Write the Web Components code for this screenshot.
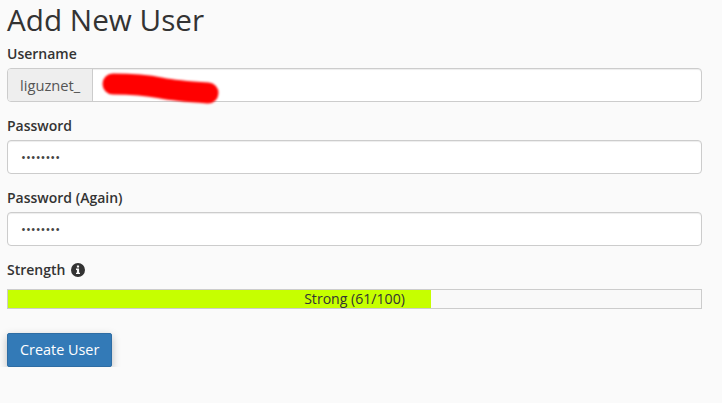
<!DOCTYPE html>
<html lang="en"><head><meta charset="utf-8"><title>Add New User</title>
<style>
html,body{margin:0;background:#fafafa}
body{font:14px/20px "Open Sans",sans-serif;color:#333}
</style></head><body>
<user-form>
  <span slot="title">Add New User</span>
  <form-field label="Username">
    <text-box prefix="liguznet_" scribble></text-box>
  </form-field>
  <form-field label="Password"><text-box masked="••••••••"></text-box></form-field>
  <form-field label="Password (Again)"><text-box masked="••••••••"></text-box></form-field>
  <form-field label="Strength" info>
    <strength-meter value="61" max="100" text="Strong"></strength-meter>
  </form-field>
  <action-button slot="actions">Create User</action-button>
</user-form>
<script>
function shadow(el,html){el.attachShadow({mode:'open'}).innerHTML=html;}
customElements.define('user-form',class extends HTMLElement{constructor(){super();shadow(this,`
<style>
:host{display:flex;flex-direction:column;padding:0 20px 0 7px}
h1{margin:0;font:400 29.7px/40px "Open Sans",sans-serif;color:#333;height:44px}
.f{display:flex;flex-direction:column;gap:14px}
.a{margin-top:24px;display:flex}
</style>
<h1><slot name="title"></slot></h1>
<div class="f"><slot></slot></div>
<div class="a"><slot name="actions"></slot></div>`);}});
customElements.define('form-field',class extends HTMLElement{constructor(){super();
const info=this.hasAttribute('info')?`<svg width="14" height="14" viewBox="0 0 14 14" aria-hidden="true"><path fill="#333" fill-rule="evenodd" d="M7 0a7 7 0 1 1 0 14A7 7 0 0 1 7 0ZM5.900 2.400v2h2.200v-2ZM5 5.600v1.300h.9v2.800H5V11h4V9.700h-.9V5.600Z"/></svg>`:'';
shadow(this,`
<style>
:host{display:block}
label{display:flex;align-items:center;gap:6px;height:20px;margin-bottom:4px;font-weight:600;color:#333}
</style>
<label>${this.getAttribute('label')}${info}</label><slot></slot>`);}});
customElements.define('text-box',class extends HTMLElement{constructor(){super();
const p=this.getAttribute('prefix'),m=this.getAttribute('masked')||'';
const sc=this.hasAttribute('scribble')?`<svg class="s" width="130" height="40" viewBox="0 0 130 40" aria-hidden="true"><defs><filter id="b" filterUnits="userSpaceOnUse" x="0" y="0" width="130" height="40"><feGaussianBlur stdDeviation=".8"/></filter></defs><path filter="url(#b)" d="M20 16C36 16 58 18 68 20S100 24 115 25" fill="none" stroke="#f00" stroke-width="21" stroke-linecap="round" stroke-linejoin="round"/></svg>`:'';
shadow(this,`
<style>
:host{display:flex;height:34px;box-sizing:border-box;border:1px solid #ccc;border-radius:4px;background:#fff;position:relative;overflow:visible;box-shadow:inset 0 1px 1px rgba(0,0,0,.075)}
.p{display:flex;align-items:center;padding:0 12px;background:#eee;border-right:1px solid #ccc;border-radius:3px 0 0 3px;color:#555;font-size:14.7px}
.v{display:flex;align-items:center;padding:0 13px;color:#444;font-size:13px}
.s{position:absolute;left:85px;top:-1px}
</style>
${p?`<span class="p">${p}</span>`:''}<span class="v">${m}</span>${sc}`);}});
customElements.define('strength-meter',class extends HTMLElement{constructor(){super();
const v=+this.getAttribute('value'),mx=+this.getAttribute('max');
shadow(this,`
<style>
:host{display:grid;height:20px;box-sizing:border-box;border:1px solid #ccc;background:#f9f9f9;margin-top:9px}
.b,.t{grid-area:1/1}
.b{background:#c6ff00;width:${v}%;height:100%}
.t{text-align:center;line-height:18px;color:#333;font-size:14.1px}
</style>
<div class="b"></div><div class="t">${this.getAttribute('text')} (${v}/${mx})</div>`);}});
customElements.define('action-button',class extends HTMLElement{constructor(){super();shadow(this,`
<style>
:host{display:inline-flex;align-items:center;height:34px;box-sizing:border-box;padding:0 12px;background:#337ab7;border:1px solid #2e6da4;border-radius:2px;color:#fff;font-size:14.4px;box-shadow:0 3px 9px rgba(0,0,0,.25);cursor:pointer}
</style><slot></slot>`);}});
</script>
</body></html>
